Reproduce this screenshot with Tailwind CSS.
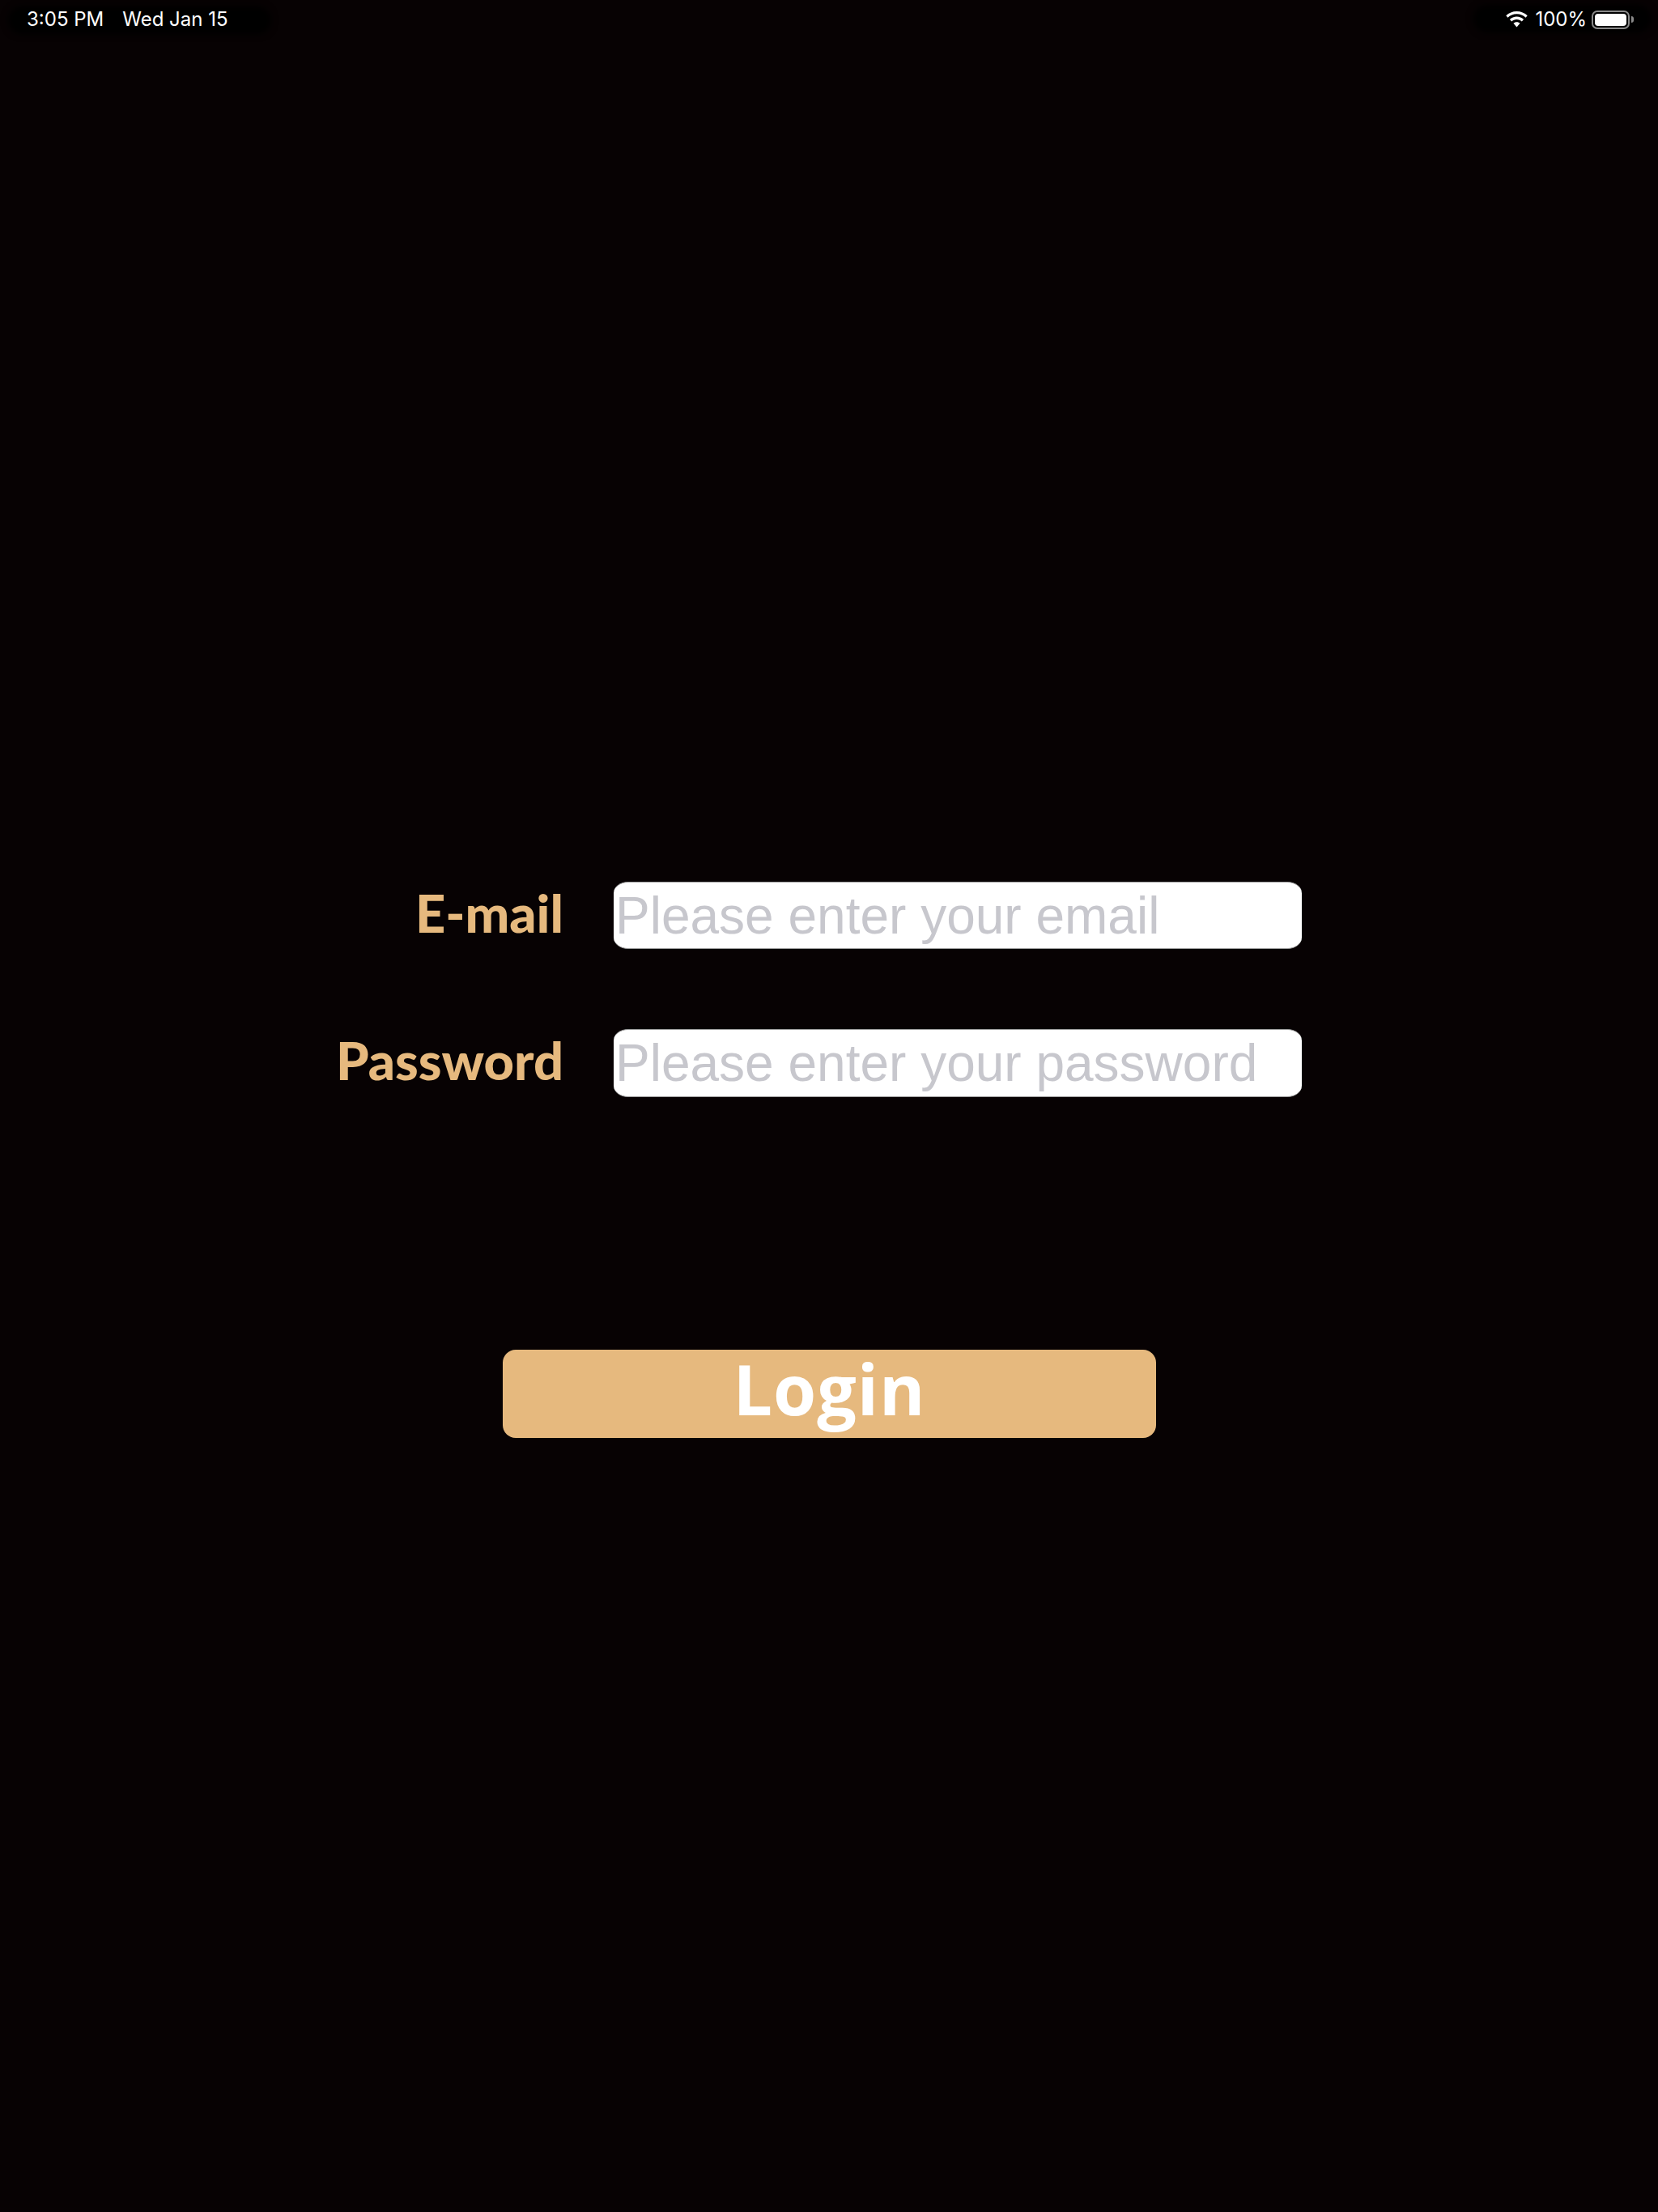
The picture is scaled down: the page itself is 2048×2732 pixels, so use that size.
<!DOCTYPE html>
<html lang="en">
<head>
  <meta charset="UTF-8" />
  <meta name="viewport" content="width=device-width, initial-scale=1.0" />
  <title>Login</title>
  <script src="https://cdn.jsdelivr.net/npm/@tailwindcss/browser@4"></script>
</head>
<body class="bg-[#070203] font-['Lato',sans-serif]">
  <div class="w-[2048px] h-[2732px] overflow-hidden">
    <!-- Status bar -->
    <div class="relative flex justify-between items-start h-[1089px] font-['Inter',sans-serif] text-[24px] text-white">
      <div class="absolute left-[10px] top-[8px] w-[325px] h-[34px] rounded-full bg-black blur-[4px]"></div>
      <div class="absolute left-[1820px] top-[6px] w-[220px] h-[34px] rounded-full bg-black blur-[4px]"></div>
      <div class="relative flex gap-[23px] pl-[33px] pt-[10px] leading-[28px]">
        <span>3:05 PM</span>
        <span>Wed Jan 15</span>
      </div>
      <div class="relative flex items-center pr-[30px] pt-[10px] h-[38px]">
        <svg class="w-[27px] h-[20px] mr-[9px]" viewBox="0 0 27 20" fill="#fff">
          <path d="M13.5 0C8.4 0 3.7 2 .3 5.3l2.2 2.4C5.3 5 9.2 3.3 13.5 3.3S21.7 5 24.5 7.7l2.2-2.4C23.3 2 18.6 0 13.5 0z" />
          <path d="M13.5 6.6c-3.3 0-6.3 1.3-8.6 3.4l2.3 2.4c1.6-1.5 3.9-2.5 6.3-2.5s4.7 1 6.3 2.5l2.3-2.4c-2.3-2.1-5.3-3.4-8.6-3.4z" />
          <path d="M13.5 13.2c-1.6 0-3 .6-4.1 1.6l4.1 4.7 4.1-4.7c-1.1-1-2.5-1.6-4.1-1.6z" />
        </svg>
        <span class="leading-[28px]">100%</span>
        <div class="flex items-center ml-[6px]">
          <div class="w-[47px] h-[23px] rounded-[7px] border-2 border-[#8a8a8a] p-[2px]">
            <div class="w-full h-full rounded-[4px] bg-white"></div>
          </div>
          <div class="w-[3px] h-[8px] ml-[2px] rounded-r-full bg-[#8a8a8a]"></div>
        </div>
      </div>
    </div>

    <!-- Login form -->
    <div class="flex items-center gap-[62px] h-[83px]">
      <label class="w-[696px] pb-[6px] text-right text-[65px] font-black text-[#e6b97e] leading-none">E-mail</label>
      <input type="text" placeholder="Please enter your email" class="w-[850px] h-[83px] pl-[2px] rounded-[18px/14px] border-y border-[#a0a0a0] bg-white font-['Liberation_Sans',sans-serif] text-[64px] placeholder:text-[#c7c7cd] outline-none" />
    </div>
    <div class="flex items-center gap-[62px] h-[83px] mt-[99px]">
      <label class="w-[696px] pb-[6px] text-right text-[65px] font-black text-[#e6b97e] leading-none">Password</label>
      <input type="password" placeholder="Please enter your password" class="w-[850px] h-[84px] pl-[2px] rounded-[18px/14px] border-y border-[#a0a0a0] bg-white font-['Liberation_Sans',sans-serif] text-[64px] placeholder:text-[#c7c7cd] outline-none" />
    </div>
    <button class="block w-[807px] h-[109px] ml-[621px] mt-[313px] pb-[14px] rounded-[16px] bg-[#e6b97e] text-white font-['Open_Sans',sans-serif] text-[86px] tracking-[1px] font-bold leading-none">Login</button>
  </div>
</body>
</html>
